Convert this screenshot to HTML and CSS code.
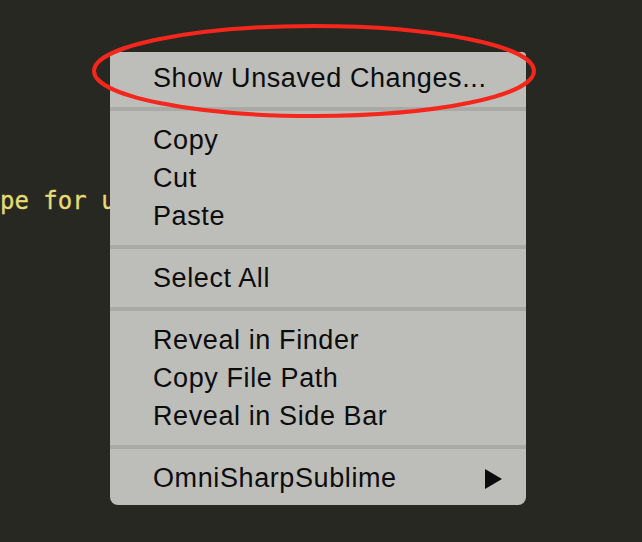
FILE: index.html
```html
<!DOCTYPE html>
<html>
<head>
<meta charset="utf-8">
<link rel="stylesheet" href="styles.css">
</head>
<body>
<div class="editor">
  <div class="code-line">pe for use</div>
</div>
<div class="menu">
  <div class="item">Show Unsaved Changes...</div>
  <div class="sep"></div>
  <div class="item">Copy</div>
  <div class="item">Cut</div>
  <div class="item">Paste</div>
  <div class="sep"></div>
  <div class="item">Select All</div>
  <div class="sep"></div>
  <div class="item">Reveal in Finder</div>
  <div class="item">Copy File Path</div>
  <div class="item">Reveal in Side Bar</div>
  <div class="sep"></div>
  <div class="item submenu">OmniSharpSublime<span class="arrow"></span></div>
</div>
<svg class="highlight" width="642" height="542" viewBox="0 0 642 542">
  <ellipse cx="314" cy="71" rx="220" ry="45" fill="none" stroke="#f5261c" stroke-width="4"/>
</svg>
</body>
</html>
```
FILE: styles.css
```css
html, body {
  margin: 0;
  padding: 0;
  width: 642px;
  height: 542px;
  overflow: hidden;
  background: #282823;
}
.editor {
  padding-top: 185px;
}
.code-line {
  font-family: "DejaVu Sans Mono", monospace;
  font-size: 24px;
  line-height: 32px;
  color: #e6db74;
  margin-left: 0;
  white-space: pre;
  -webkit-text-stroke: 0.3px #e6db74;
}
.menu {
  position: absolute;
  left: 110px;
  top: 52px;
  width: 416px;
  box-sizing: border-box;
  padding: 7px 0 8px;
  background: #bdbdb9;
  border-radius: 4px 4px 8px 8px;
  font-family: "Liberation Sans", Arial, sans-serif;
  font-size: 27px;
  letter-spacing: 0.6px;
  color: #0c0c0c;
}
.item {
  height: 38px;
  line-height: 38px;
  padding-left: 43px;
  padding-right: 24px;
  white-space: nowrap;
}
.submenu {
  display: flex;
  align-items: center;
  justify-content: space-between;
}
.arrow {
  width: 0;
  height: 0;
  border-top: 10px solid transparent;
  border-bottom: 10px solid transparent;
  border-left: 17px solid #0c0c0c;
  margin-top: 1px;
}
.sep {
  height: 4px;
  margin: 10px 0;
  background: #a9a9a5;
}
.highlight {
  position: absolute;
  left: 0;
  top: 0;
  pointer-events: none;
}
```
